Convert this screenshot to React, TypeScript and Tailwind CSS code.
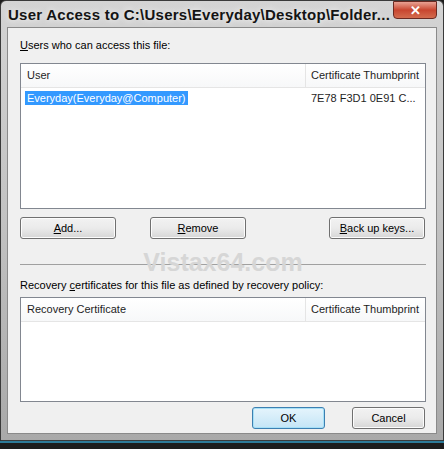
const ui = { fontFamily: '"Liberation Sans", Arial, sans-serif' };

function Btn({ label, u, rest, primary, w }: { label?: string; u?: string; rest?: string; primary?: boolean; w: string }) {
  return (
    <button
      className={
        "h-[22px] rounded-[3px] border text-[11px] text-black whitespace-nowrap " +
        w +
        (primary
          ? " border-[#3c7fb1] bg-gradient-to-b from-[#e5f4fc] to-[#c4e5f6] shadow-[inset_0_0_0_1px_#a6e0f7]"
          : " border-[#707070] bg-gradient-to-b from-[#f2f2f2] via-[#ebebeb] to-[#d6d6d6] shadow-[inset_0_0_0_1px_#fcfcfc]")
      }
    >
      {label ? label : <><span className="underline">{u}</span>{rest}</>}
    </button>
  );
}

function ListBox({ col1, h, children }: { col1: string; h: string; children?: React.ReactNode }) {
  return (
    <div className={"border border-[#828790] bg-white " + h}>
      <div className="flex h-[24px] items-center whitespace-nowrap border-b border-[#e5e5e5] bg-gradient-to-b from-white to-[#f7f8f9] text-[11px] text-[#1e1e1e]">
        <div className="w-[284px] shrink-0 pl-[6px]">{col1}</div>
        <div className="h-full border-l border-[#e5e5e5]" />
        <div className="pl-[5px]">Certificate Thumbprint</div>
      </div>
      {children}
    </div>
  );
}

export default function App() {
  return (
    <div className="relative h-[449px] w-[444px] overflow-hidden bg-[#1c1c1c]" style={ui}>
      <div className="flex h-[441px] w-[444px] flex-col rounded-t-[6px] border border-[#3a3a3a] bg-gradient-to-b from-[#d4d4d4] via-[#c2c2c2] to-[#a9a9a9] px-[6px] pb-[6px]">
        <div className="flex h-[26px] shrink-0 items-start justify-between">
          <div
            className="whitespace-nowrap pl-[1px] pt-[5px] text-[15px] font-bold leading-[18px] tracking-[0.25px] text-[#141414]"
            style={{ textShadow: "0 0 6px #fff" }}
          >
            User Access to C:\Users\Everyday\Desktop\Folder...
          </div>
          <div className="flex h-[18px] w-[44px] shrink-0 items-center justify-center rounded-b-[4px] border border-[#6b2a22] bg-gradient-to-b from-[#e8a193] via-[#c8452f] to-[#d36b4e] text-[13px] font-bold leading-none text-white">
            ✕
          </div>
        </div>
        <div className="flex flex-1 flex-col border border-[#8a8a8a] bg-[#f0f0f0] pl-[12px] pr-[10px] text-[11px] text-black">
          <div className="mt-[9px] leading-[16px]">
            <span className="underline">U</span>sers who can access this file:
          </div>
          <div className="mt-[10px]">
            <ListBox col1="User" h="h-[146px]">
              <div className="mt-[2px] flex h-[16px] items-center whitespace-nowrap">
                <div className="ml-[4px] w-[280px] shrink-0">
                  <span className="bg-[#3399ff] px-[2px] py-[1px] text-white">Everyday(Everyday@Computer)</span>
                </div>
                <div className="pl-[6px] text-[#1e1e1e]">7E78 F3D1 0E91 C...</div>
              </div>
            </ListBox>
          </div>
          <div className="mt-[8px] flex justify-between pr-[1px]">
            <div className="flex gap-[34px]">
              <Btn u="A" rest="dd..." w="w-[96px]" />
              <Btn u="R" rest="emove" w="w-[96px]" />
            </div>
            <Btn u="B" rest="ack up keys..." w="w-[96px]" />
          </div>
          <div className="relative mt-[25px] h-[1px] bg-[#a0a0a0]">
            <div className="absolute left-1/2 top-[-14px] -translate-x-1/2 whitespace-nowrap text-[25px] font-bold leading-none text-[#d6d6d6]">
              Vistax64.com
            </div>
          </div>
          <div className="relative mt-[12px] whitespace-nowrap leading-[16px]">
            Recovery <span className="underline">c</span>ertificates for this file as defined by recovery policy:
          </div>
          <div className="mt-[4px]">
            <ListBox col1="Recovery Certificate" h="h-[105px]" />
          </div>
          <div className="mt-[5px] flex justify-end gap-[27px] pr-[1px]">
            <Btn label="OK" primary w="w-[73px]" />
            <Btn label="Cancel" w="w-[73px]" />
          </div>
        </div>
      </div>
      <div className="h-[2px] bg-[#2d7a98]" />
    </div>
  );
}
